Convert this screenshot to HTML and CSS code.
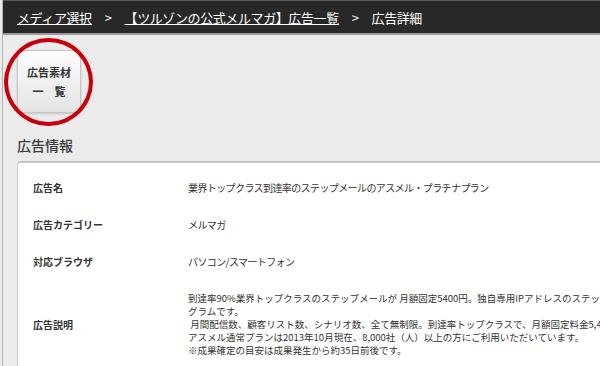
FILE: index.html
```html
<!DOCTYPE html>
<html lang="ja">

<head>
  <meta charset="UTF-8" />
  <title>広告詳細</title>
  <link rel="stylesheet" href="styles.css">
</head>

<body>
  <div class="page">
    <div class="header">
      <a href="#">メディア選択</a><span class="sep">&gt;</span><a href="#">【ツルゾンの公式メルマガ】広告一覧</a><span class="sep">&gt;</span><span>広告詳細</span>
    </div>

    <div class="content">
      <div class="tools">
        <a href="#" class="material-btn">広告素材<br>一　覧</a>
        <span class="mark"></span>
      </div>

      <h2>広告情報</h2>

      <div class="card">
        <table class="info">
          <tr>
            <th>広告名</th>
            <td>業界トップクラス到達率のステップメールのアスメル・プラチナプラン</td>
          </tr>
          <tr>
            <th>広告カテゴリー</th>
            <td>メルマガ</td>
          </tr>
          <tr>
            <th>対応ブラウザ</th>
            <td>パソコン/スマートフォン</td>
          </tr>
          <tr>
            <th>広告説明</th>
            <td class="desc">
              <div>到達率90%業界トップクラスのステップメールが 月額固定5400円。独自専用IPアドレスのステップメールプロ</div>
              <div>グラムです。</div>
              <div>&nbsp;月間配信数、顧客リスト数、シナリオ数、全て無制限。到達率トップクラスで、月額固定料金5,400円です。</div>
              <div>アスメル通常プランは2013年10月現在、8,000社（人）以上の方にご利用いただいています。</div>
              <div>※成果確定の目安は成果発生から約35日前後です。</div>
            </td>
          </tr>
        </table>
      </div>
    </div>
  </div>
</body>

</html>
```

FILE: styles.css
```css
body {
  margin: 0;
  padding-left: 2px;
  background-color: #ebebeb;
  font-family: "Noto Sans CJK JP", "Noto Sans", sans-serif;
  color: #333;
  overflow: hidden;
}

.page {
  width: 900px;
  min-height: 366px;
  border-left: 1px solid #b4b4b4;
}

.header {
  height: 32px;
  padding-left: 14px;
  background-color: #282828;
  border-top: 1px solid #5a5a5a;
  border-bottom: 2px solid #9a9a9a;
  display: flex;
  align-items: center;
  font-size: 13px;
  color: #fff;
  letter-spacing: -0.4px;
}

.header a {
  color: #fff;
  text-decoration: underline;
}

.header .sep {
  margin: 0 13px;
}

.content {
  padding: 0 14px;
}

.tools {
  position: relative;
  padding-top: 15px;
  height: 63px;
}

.material-btn {
  display: flex;
  align-items: center;
  justify-content: center;
  width: 64px;
  height: 63px;
  box-sizing: border-box;
  border: 1px solid #c4c4c4;
  border-radius: 2px;
  background: linear-gradient(#fdfdfd, #e4e4e4);
  box-shadow: 0 1px 2px rgba(0, 0, 0, 0.15);
  text-align: center;
  font-size: 11px;
  font-weight: bold;
  line-height: 19px;
  color: #333;
  text-decoration: none;
}

.mark {
  position: absolute;
  left: -13px;
  top: 3px;
  width: 89px;
  height: 88px;
  box-sizing: border-box;
  border: 4px solid #c8000b;
  border-radius: 50%;
}

h2 {
  margin: 22px 0 6px;
  font-size: 14px;
  font-weight: 500;
  line-height: 20px;
  color: #3a3a3a;
}

.card {
  background: #fff;
  border: 1px solid #cdcdcd;
  border-top: 2px solid #c6c6c6;
  border-radius: 4px;
  padding: 6px 0;
}

.info {
  border-collapse: collapse;
  font-size: 10px;
  line-height: 13px;
}

.info th {
  width: 155px;
  padding: 12px 0 12px 15px;
  text-align: left;
  vertical-align: middle;
  font-weight: bold;
  color: #333;
}

.info td {
  padding: 12px 0;
  vertical-align: middle;
  letter-spacing: -0.6px;
  color: #333;
}

.desc div {
  height: 13px;
  font-size: 9.5px;
  letter-spacing: 0;
  white-space: nowrap;
}
```
